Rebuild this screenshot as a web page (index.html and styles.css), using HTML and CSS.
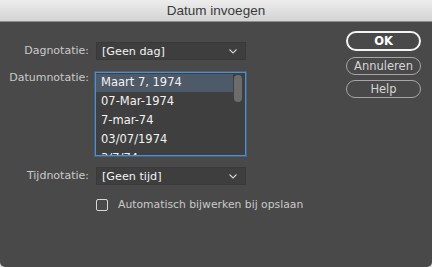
FILE: index.html
```html
<!DOCTYPE html>
<html>
<head>
<meta charset="utf-8">
<link rel="stylesheet" href="styles.css">
</head>
<body>
<div class="window">
  <div class="titlebar">Datum invoegen</div>
  <div class="content">
    <div class="form">
      <div class="row row-day">
        <div class="label">Dagnotatie:</div>
        <div class="select"><span>[Geen dag]</span>
          <svg class="chev" width="8" height="5" viewBox="0 0 8 5"><path d="M0.5 0.5 L4 4 L7.5 0.5" fill="none" stroke="#cfcfcf" stroke-width="1.1"/></svg>
        </div>
      </div>
      <div class="row row-date">
        <div class="label">Datumnotatie:</div>
        <div class="list">
          <div class="item selected">Maart 7, 1974</div>
          <div class="item">07-Mar-1974</div>
          <div class="item">7-mar-74</div>
          <div class="item">03/07/1974</div>
          <div class="item">3/7/74</div>
          <div class="scrollbar"></div>
        </div>
      </div>
      <div class="row row-time">
        <div class="label">Tijdnotatie:</div>
        <div class="select"><span>[Geen tijd]</span>
          <svg class="chev" width="8" height="5" viewBox="0 0 8 5"><path d="M0.5 0.5 L4 4 L7.5 0.5" fill="none" stroke="#cfcfcf" stroke-width="1.1"/></svg>
        </div>
      </div>
      <div class="row row-check">
        <div class="label"></div>
        <label class="check"><span class="box"></span><span>Automatisch bijwerken bij opslaan</span></label>
      </div>
    </div>
    <div class="buttons">
      <div class="btn btn-ok">OK</div>
      <div class="btn">Annuleren</div>
      <div class="btn">Help</div>
    </div>
  </div>
</div>
</body>
</html>
```

FILE: styles.css
```css
html, body {
  margin: 0;
  padding: 0;
  background: #d9d9d9;
}
body {
  width: 432px;
  height: 267px;
  overflow: hidden;
  font-family: "DejaVu Sans", "Liberation Sans", sans-serif;
}
.window {
  width: 432px;
  height: 267px;
  background: #494949;
  border-radius: 0 0 5px 5px;
  overflow: hidden;
  display: flex;
  flex-direction: column;
}
.titlebar {
  height: 22px;
  box-sizing: border-box;
  background: linear-gradient(#ededed, #d3d3d3);
  border-bottom: 1px solid #8e8e8e;
  color: #3a3a3a;
  font-family: "Liberation Sans", Arial, sans-serif;
  font-size: 13.5px;
  line-height: 22px;
  text-align: center;
}
.content {
  flex: 1;
  display: flex;
  justify-content: space-between;
  padding: 9px 11px 0 0;
}
.form {
  display: flex;
  flex-direction: column;
  padding-top: 11px;
}
.row {
  display: flex;
  align-items: flex-start;
}
.label {
  width: 96px;
  text-align: right;
  color: #c9c9c9;
  font-size: 11px;
  padding-right: 7px;
  box-sizing: border-box;
}
.row-day .label, .row-time .label {
  line-height: 18px;
}
.row-date { margin-top: 12px; }
.row-date .label { width: 95px; line-height: 12px; padding-top: 0; padding-right: 6px; }
.row-time { margin-top: 11px; }
.row-check { margin-top: 13px; }
.select {
  width: 150px;
  height: 18px;
  box-sizing: border-box;
  background: #3e3e3e;
  border: 1px solid #393939;
  display: flex;
  align-items: center;
  justify-content: space-between;
  padding: 0 8px 0 5px;
  color: #f2f2f2;
  font-size: 11.2px;
}
.chev { margin-top: 1px; }
.list {
  position: relative;
  width: 151px;
  height: 84px;
  box-sizing: border-box;
  background: #3f3f3f;
  border: 1px solid #4b8fd6;
  box-shadow: 0 0 0 1px rgba(75,143,214,0.35);
  overflow: hidden;
  padding-top: 0;
}
.item {
  height: 19px;
  line-height: 19px;
  padding-left: 5px;
  color: #f2f2f2;
  font-size: 11.5px;
}
.item.selected {
  background: #4e5a68;
  margin-right: 12px;
  margin-top: 1px;
  height: 18px;
  line-height: 17px;
}
.scrollbar {
  position: absolute;
  right: 3px;
  top: 2px;
  width: 8px;
  height: 27px;
  border-radius: 4px;
  background: #6c6c6c;
}
.check {
  display: flex;
  align-items: center;
  color: #c9c9c9;
  font-size: 10.8px;
}
.box {
  width: 10px;
  height: 10px;
  border: 1px solid #d8d8d8;
  border-radius: 2px;
  margin-right: 10px;
  margin-left: 0;
}
.buttons {
  display: flex;
  flex-direction: column;
  gap: 5px;
  width: 75px;
}
.btn {
  height: 18px;
  box-sizing: border-box;
  border: 1px solid #a6a6a6;
  border-radius: 9px;
  color: #d6d6d6;
  font-size: 11.5px;
  line-height: 16px;
  text-align: center;
}
.btn-ok {
  height: 20px;
  border: 2px solid #f4f4f4;
  border-radius: 10px;
  color: #ffffff;
  font-weight: bold;
  line-height: 16px;
  margin-bottom: 1px;
}
```
